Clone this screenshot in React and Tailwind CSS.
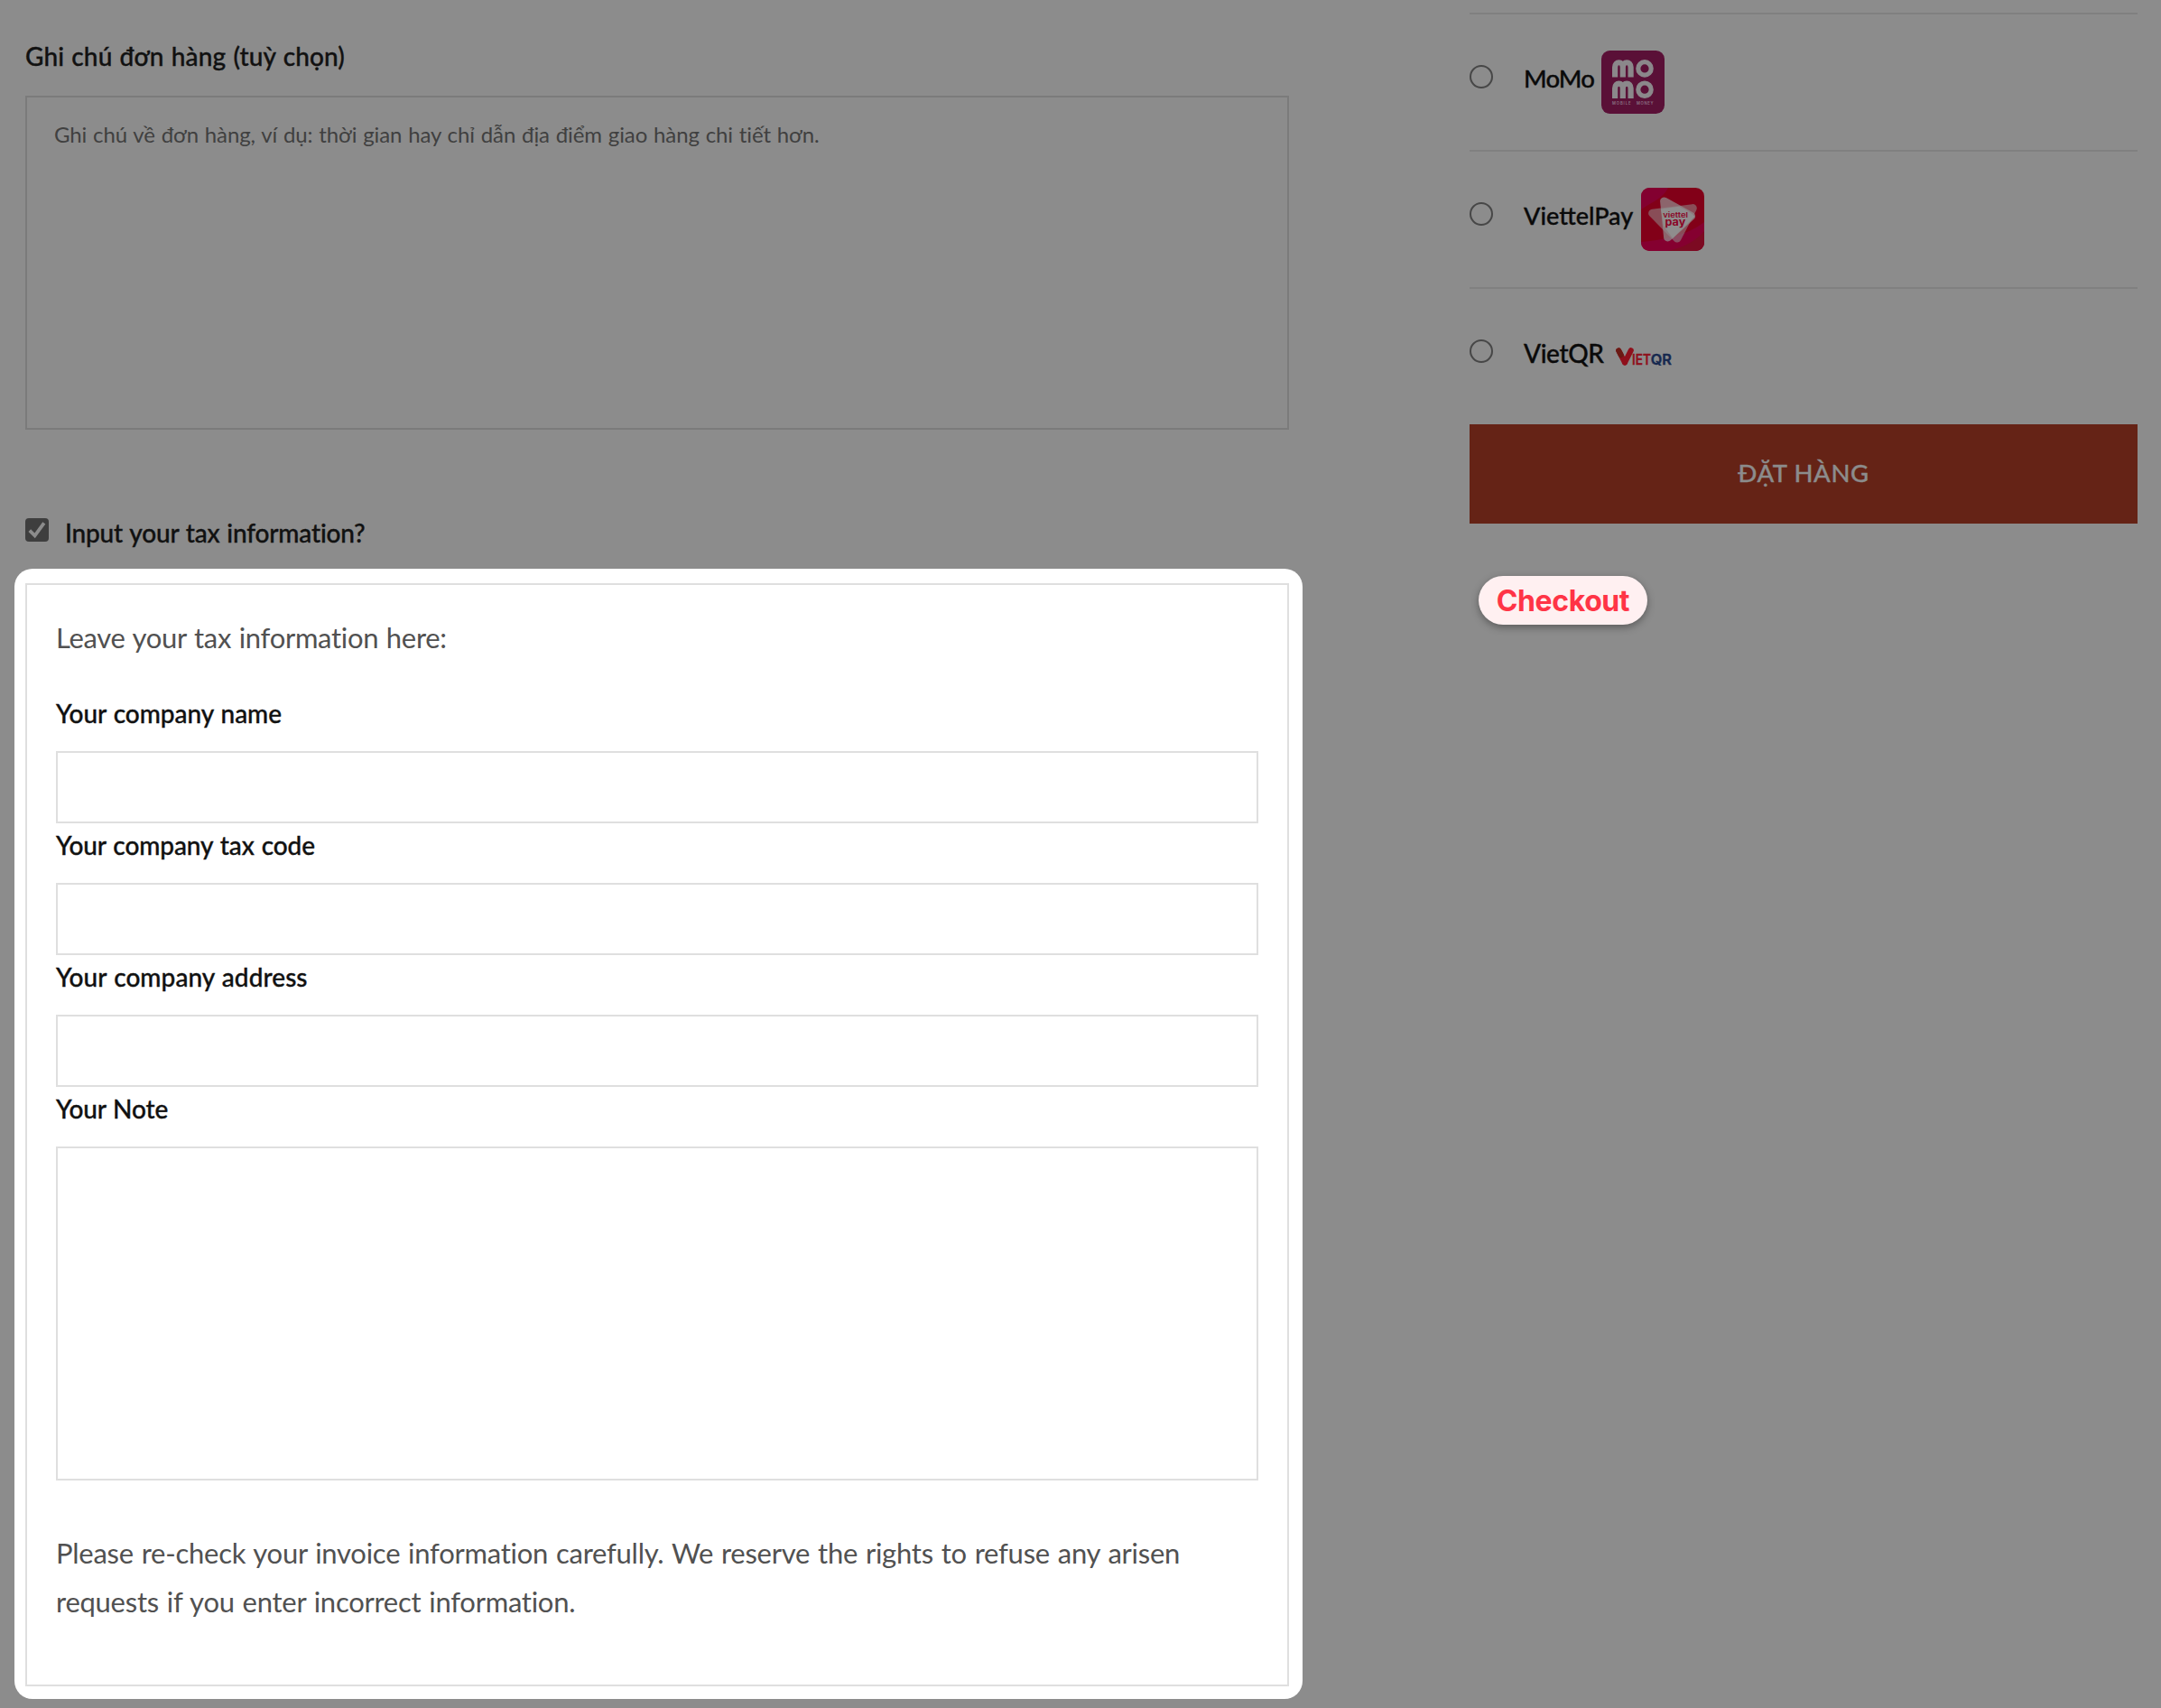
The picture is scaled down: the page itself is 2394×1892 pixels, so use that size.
import React from 'react';

function MomoLogo() {
  return (
    <svg viewBox="0 0 70 70" className="mt-10 h-[70px] w-[70px] shrink-0">
      <rect width="70" height="70" rx="9.5" fill="#5a1037" />
      {[0, 23.3].map((dy) => (
        <g key={dy} transform={`translate(0 ${dy})`} fill="none" stroke="#8b888b">
          <path
            d="M15.1 29.6V18.5c0-7 8.7-7 8.7 0V29.6M23.8 18.5c0-7 8.8-7 8.8 0V29.6"
            strokeWidth="6.2"
          />
          <circle cx="48" cy="19.9" r="7.2" strokeWidth="5.2" />
        </g>
      ))}
      <g fill="#8b7284" fontFamily="Inter, sans-serif" fontSize="4.2" fontWeight="600">
        <text x="12" y="60" textLength="20.5">MOBILE</text>
        <text x="39" y="60" textLength="18.5">MONEY</text>
      </g>
    </svg>
  );
}

function ViettelPayLogo() {
  return (
    <svg viewBox="0 0 70 70" className="mt-10 h-[70px] w-[70px] shrink-0">
      <defs>
        <clipPath id="vp-clip">
          <rect width="70" height="70" rx="9.5" />
        </clipPath>
      </defs>
      <g clipPath="url(#vp-clip)">
        <rect width="70" height="70" fill="#820018" />
        <path d="M0 0H30C24 12 12 16 0 24Z" fill="#830030" />
        <path d="M0 60C26 58 52 52 70 38V70H0Z" fill="#850030" />
        <path d="M30 70C48 66 62 58 70 48V70Z" fill="#7c0a22" />
      </g>
      <g strokeLinejoin="round" strokeWidth="9">
        <path d="M12.6 28.2L57.3 22.6L40 56Z" fill="#8f8c8c" stroke="#8f8c8c" opacity="0.55" />
        <path d="M25.6 14.9L55.6 31.5L29.6 55Z" fill="#908d8d" stroke="#908d8d" opacity="0.72" />
      </g>
      <path d="M22 23.5L42 20.8Q57 28 59.5 32L41 50L35 56L25 42Z" fill="#8f8d8d" />
      <g fill="#8a0626" fontFamily="Inter, sans-serif">
        <text x="24.3" y="33.2" fontSize="7.4" fontWeight="600" textLength="27.7" lengthAdjust="spacingAndGlyphs">viettel</text>
        <text x="26.6" y="42.4" fontSize="11.4" fontWeight="700" textLength="22.6" lengthAdjust="spacingAndGlyphs">pay</text>
      </g>
    </svg>
  );
}

function VietQrLogo() {
  return (
    <svg viewBox="0 0 66 24" className="mt-[65px] h-[24px] w-[66px] shrink-0">
      <path d="M3.2 3.4L10 16.6" stroke="#8f101c" strokeWidth="6" strokeLinecap="round" />
      <path d="M3.2 3.4L5.8 8.2" stroke="#6a1a14" strokeWidth="6" strokeLinecap="round" />
      <path d="M16.8 3.2L10 16.6" stroke="#8f101c" strokeWidth="6" strokeLinecap="round" />
      <g fontFamily="Inter, sans-serif" fontSize="16.4" fontWeight="600" strokeWidth="0.4">
        <text x="18" y="19.4" fill="#8f101c" stroke="#8f101c" textLength="20.8" lengthAdjust="spacingAndGlyphs">IET</text>
        <text x="38.8" y="19.4" fill="#16284f" stroke="#16284f" textLength="23.2" lengthAdjust="spacingAndGlyphs">QR</text>
      </g>
    </svg>
  );
}

const METHODS = [
  { name: 'MoMo', text: 'w-[86px] text-[27.5px] tracking-[-0.8px]', Logo: MomoLogo },
  { name: 'ViettelPay', text: 'w-[130px] text-[27px]', Logo: ViettelPayLogo },
  { name: 'VietQR', text: 'w-[102px] text-[28px] tracking-[-0.4px]', Logo: VietQrLogo },
];

const FIELDS = [
  { label: 'Your company name', track: 'tracking-[-0.04px]' },
  { label: 'Your company tax code', track: 'tracking-[-0.1px]' },
  { label: 'Your company address', track: 'tracking-[0.06px]' },
];

function Label({ children, className = '' }) {
  return (
    <label
      className={`block text-[28px] leading-10 font-medium whitespace-nowrap text-[#111] [word-spacing:1px] [-webkit-text-stroke:0.35px_currentColor] ${className}`}
    >
      {children}
    </label>
  );
}

function TaxPanel() {
  return (
    <section className="mt-5 -ml-3 h-[1252px] w-[1427px] rounded-[20px] bg-white pt-4 pl-3">
      <div className="h-[1222px] w-[1400px] border-2 border-[#dfdfdf] px-8 pt-[31px]">
        <p className="mb-[37px] text-[31px] leading-[54px] tracking-[-0.3px] text-[#515151] [word-spacing:1px]">
          Leave your tax information here:
        </p>
        {FIELDS.map((f) => (
          <div key={f.label} className="mb-1">
            <Label className={f.track}>{f.label}</Label>
            <input className="mt-[22px] block h-20 w-full border-2 border-[#dfdfdf] bg-white px-7" />
          </div>
        ))}
        <Label className="tracking-[-0.15px]">Your Note</Label>
        <textarea className="mt-[22px] block h-[370px] w-full resize-none border-2 border-[#dfdfdf] bg-white" />
        <p className="mt-[53px] text-[31px] leading-[54px] tracking-[-0.26px] text-[#515151] [word-spacing:1.2px]">
          Please re-check your invoice information carefully. We reserve the rights to refuse any arisen
          <br />
          requests if you enter incorrect information.
        </p>
      </div>
    </section>
  );
}

export default function App() {
  return (
    <main className="flex h-[1892px] w-[2394px] overflow-hidden bg-[#8c8c8c] pl-7 font-['Lato','Noto_Sans',sans-serif] [font-variant-ligatures:no-common-ligatures]">
      <div className="w-[1400px] shrink-0 pt-[42px]">
        <Label className="tracking-[0.12px] text-[#0a0a0a]">Ghi chú đơn hàng (tuỳ chọn)</Label>
        <textarea
          className="mt-6 block h-[370px] w-full resize-none border-2 border-[#7b7b7b] bg-transparent px-[30px] pt-[21px] text-2xl leading-10 tracking-[-0.1px] [word-spacing:0.8px] placeholder:text-[#404040]"
          placeholder="Ghi chú về đơn hàng, ví dụ: thời gian hay chỉ dẫn địa điểm giao hàng chi tiết hơn."
        />
        <div className="mt-[94px] flex gap-[18px]">
          <span className="mt-1 h-[26px] w-[26px] rounded-[4px] bg-[#3e3e3e]">
            <svg viewBox="0 0 26 26" className="h-full w-full" fill="none" stroke="#8c8c8c" strokeWidth="3.8">
              <path d="M4.8 13.6L10.6 19.4L20.8 5.4" />
            </svg>
          </span>
          <Label className="tracking-[-0.18px] text-[#0a0a0a]">Input your tax information?</Label>
        </div>
        <TaxPanel />
      </div>

      <aside className="ml-[200px] w-[740px] pt-3.5">
        {METHODS.map(({ name, text, Logo }) => (
          <div key={name} className="flex h-[152px] border-t-2 border-[#808080]">
            <span className="mt-14 mr-[34px] h-[26px] w-[26px] shrink-0 rounded-full border-2 border-[#474747]" />
            <span
              className={`mt-[51px] leading-10 font-medium text-[#0a0a0a] [-webkit-text-stroke:0.35px_currentColor] [font-variant-ligatures:common-ligatures] ${text}`}
            >
              {name}
            </span>
            <Logo />
          </div>
        ))}
        <button className="block h-[110px] w-full bg-[#652316] pb-0.5 text-[27.5px] leading-10 font-medium tracking-[0.6px] text-[#8c8c8c] [-webkit-text-stroke:0.35px_currentColor]">
          ĐẶT HÀNG
        </button>
        <div className="mt-[58px] ml-2.5 flex h-[54px] w-[187px] items-center justify-center rounded-full bg-[#fff0f1] pt-px font-['Inter',sans-serif] text-[32px] leading-none font-bold tracking-[-0.4px] text-[#ff3446] shadow-[0_3px_8px_rgba(0,0,0,0.35)]">
          Checkout
        </div>
      </aside>
    </main>
  );
}
